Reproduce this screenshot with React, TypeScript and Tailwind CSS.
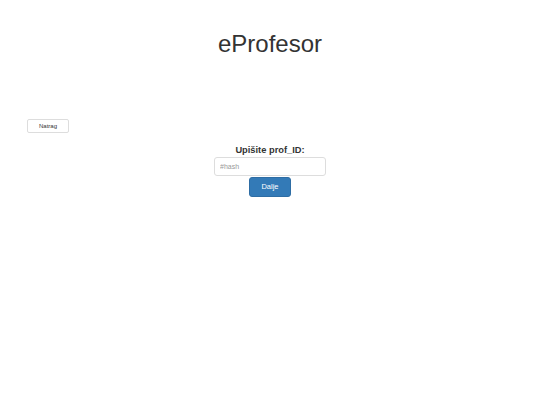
import React, { useState } from 'react';

const App: React.FC = () => {
  const [hash, setHash] = useState('');

  return (
    <div className="min-h-screen bg-white text-[#333] font-['Liberation_Sans',Arial,sans-serif]">
      {/* Title */}
      <div className="pt-[30px] flex justify-center">
        <h1 className="text-[24px] leading-[28px] font-normal">eProfesor</h1>
      </div>

      {/* Back button */}
      <div className="mt-[61px] pl-[27px] flex">
        <button
          type="button"
          className="w-[42px] h-[14px] flex items-center justify-center bg-white border border-[#ddd] rounded-[2px] text-[6px] leading-none text-[#333]"
        >
          Natrag
        </button>
      </div>

      {/* Form */}
      <div className="mt-[11px] flex flex-col items-center">
        <label htmlFor="hash" className="text-[9.3px] leading-[12px] font-bold">
          Upišite prof_ID:
        </label>
        <input
          id="hash"
          value={hash}
          onChange={(e) => setHash(e.target.value)}
          placeholder="#hash"
          className="mt-[1px] w-[112px] h-[19px] px-[5px] border border-[#ddd] rounded-[3px] text-[7px] text-[#555] placeholder-[#999] outline-none"
        />
        <button
          type="button"
          className="mt-[1px] w-[42px] h-[20px] flex items-center justify-center bg-[#337ab7] border border-[#2e6da4] rounded-[3px] text-[7.5px] leading-none text-white"
        >
          Dalje
        </button>
      </div>
    </div>
  );
};

export default App;
